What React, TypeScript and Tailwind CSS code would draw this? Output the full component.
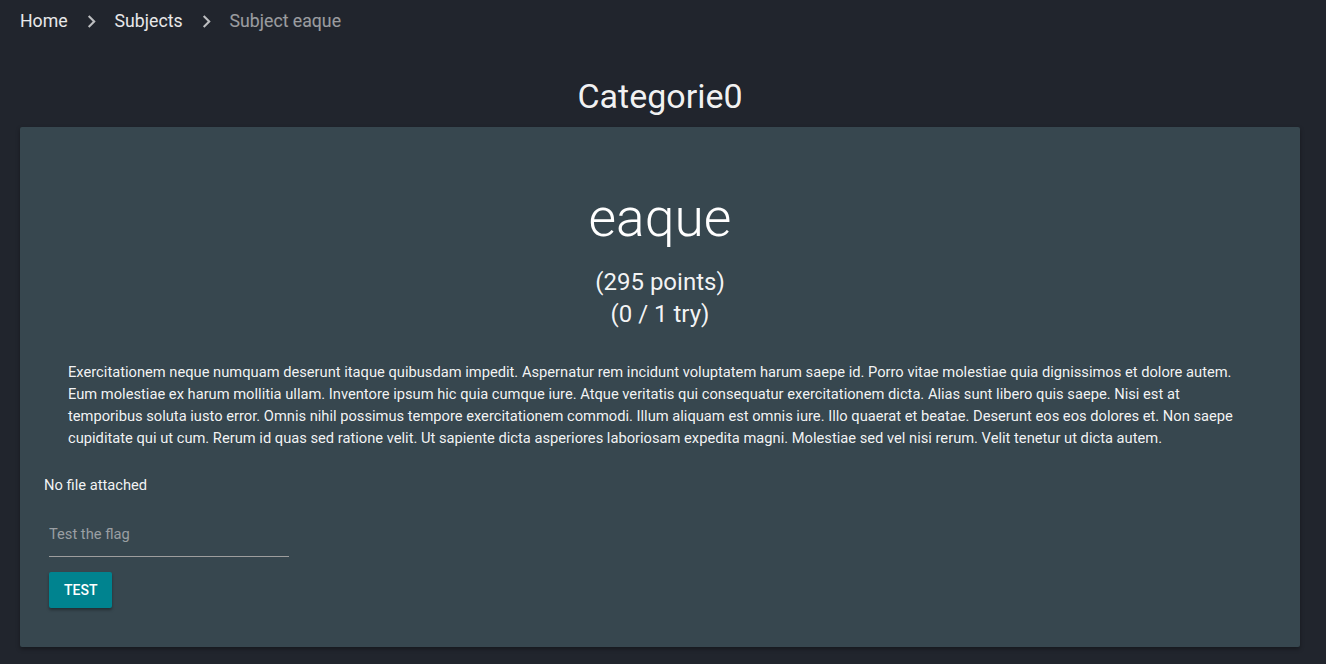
const description =
  'Exercitationem neque numquam deserunt itaque quibusdam impedit. Aspernatur rem incidunt voluptatem harum saepe id. Porro vitae molestiae quia dignissimos et dolore autem. Eum molestiae ex harum mollitia ullam. Inventore ipsum hic quia cumque iure. Atque veritatis qui consequatur exercitationem dicta. Alias sunt libero quis saepe. Nisi est at temporibus soluta iusto error. Omnis nihil possimus tempore exercitationem commodi. Illum aliquam est omnis iure. Illo quaerat et beatae. Deserunt eos eos dolores et. Non saepe cupiditate qui ut cum. Rerum id quas sed ratione velit. Ut sapiente dicta asperiores laboriosam expedita magni. Molestiae sed vel nisi rerum. Velit tenetur ut dicta autem.';

function Chevron() {
  return (
    <svg viewBox="0 0 24 24" className="w-[25px] h-[25px] mx-[11px] fill-white/70 shrink-0">
      <path d="M10 6L8.59 7.41 13.17 12l-4.58 4.59L10 18l6-6z" />
    </svg>
  );
}

export default function App() {
  return (
    <div
      className="min-h-[664px] bg-[#21252d] text-white"
      style={{ fontFamily: 'Roboto, "Noto Sans", sans-serif' }}
    >
      {/* Breadcrumb */}
      <nav className="flex items-center h-[43px] px-5 text-[17.7px]">
        <span className="text-white/90">Home</span>
        <Chevron />
        <span className="text-white/90">Subjects</span>
        <Chevron />
        <span className="text-white/55">Subject eaque</span>
      </nav>

      <div className="ml-5 w-[1280px]">
        <h4 className="text-center text-[34px] leading-[40px] pt-[33px] pb-[11px] text-white/95">
          Categorie0
        </h4>

        {/* Challenge card */}
        <div className="bg-[#37474f] shadow-[0_2px_4px_rgba(0,0,0,0.35)] rounded-[2px] px-6 pt-[59px] pb-[39px]">
          <h2 className="text-center font-light text-[53.4px] leading-[64px]">eaque</h2>
          <div className="text-center text-[24px] leading-[32px] mt-4 text-white/95">
            <div>(295 points)</div>
            <div>(0 / 1 try)</div>
          </div>

          <p className="px-6 mt-[31px] text-[14.7px] leading-[22px] text-white/95">{description}</p>

          <div className="mt-[26px] text-[14.7px] leading-[20px] text-white/95">No file attached</div>

          <div className="ml-[5px] mt-[16px] w-[240px]">
            <input
              placeholder="Test the flag"
              className="w-full h-[46px] bg-transparent border-b border-[#9e9e9e] outline-none text-[14.7px] text-white placeholder:text-[#9a9fa3] pt-[1px]"
            />
          </div>

          <button className="ml-[5px] mt-[15px] h-9 px-[15px] bg-[#00838f] rounded-[2px] text-[14px] font-medium uppercase text-white shadow-[0_2px_3px_rgba(0,0,0,0.35)]">
            Test
          </button>
        </div>
      </div>
    </div>
  );
}
